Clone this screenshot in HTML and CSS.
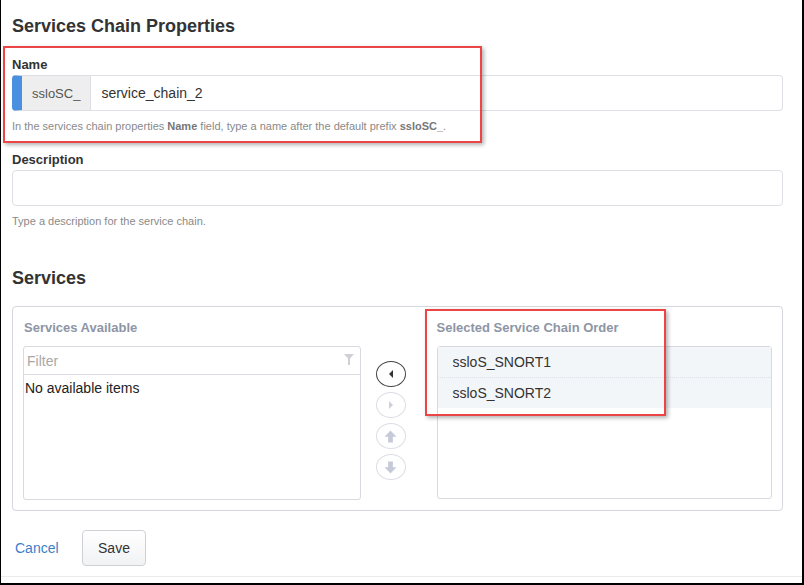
FILE: index.html
```html
<!DOCTYPE html>
<html>
<head>
<meta charset="utf-8">
<link rel="stylesheet" href="styles.css">
</head>
<body>
<div class="frame">
  <div class="page">
    <h1 class="title">Services Chain Properties</h1>

    <div class="field">
      <div class="label label-name">Name</div>
      <div class="input-group">
        <span class="addon">ssloSC_</span>
        <span class="input input-joined">service_chain_2</span>
      </div>
      <p class="help help-name">In the services chain properties <b>Name</b> field, type a name after the default prefix <b>ssloSC_</b>.</p>
    </div>

    <div class="field">
      <div class="label label-desc">Description</div>
      <div class="input input-full"></div>
      <p class="help help-desc">Type a description for the service chain.</p>
    </div>

    <h2 class="section-title">Services</h2>

    <div class="panel">
      <div class="col col-left">
        <div class="col-label">Services Available</div>
        <div class="list list-left">
          <div class="filter">
            <span class="filter-text">Filter</span>
            <svg class="funnel" width="10" height="11" viewBox="0 0 10 11"><polygon points="0,0 10,0 6,4.5 6,11 4,11 4,4.5" fill="#cfd0d4"/></svg>
          </div>
          <div class="empty">No available items</div>
        </div>
      </div>

      <div class="btn-col">
        <div class="circle circle-active">
          <svg width="6" height="8" viewBox="0 0 6 8"><polygon points="5,0 5,8 1,4" fill="#333"/></svg>
        </div>
        <div class="circle">
          <svg width="6" height="8" viewBox="0 0 6 8"><polygon points="1,0 1,8 5,4" fill="#ccd0d9"/></svg>
        </div>
        <div class="circle">
          <svg width="13" height="13" viewBox="0 0 12 12"><polygon points="6,0.5 11.5,6.2 8.2,6.2 8.2,11.5 3.8,11.5 3.8,6.2 0.5,6.2" fill="#c5cad6"/></svg>
        </div>
        <div class="circle">
          <svg width="13" height="13" viewBox="0 0 12 12"><polygon points="6,11.5 11.5,5.8 8.2,5.8 8.2,0.5 3.8,0.5 3.8,5.8 0.5,5.8" fill="#c5cad6"/></svg>
        </div>
      </div>

      <div class="col col-right">
        <div class="col-label">Selected Service Chain Order</div>
        <div class="list list-right">
          <div class="item">ssloS_SNORT1</div>
          <div class="item">ssloS_SNORT2</div>
        </div>
      </div>
    </div>

    <div class="actions">
      <a class="cancel">Cancel</a>
      <button class="save">Save</button>
    </div>
    <div class="bottom-line"></div>
  </div>

  <div class="callout callout-name"></div>
  <div class="callout callout-order"></div>
</div>
</body>
</html>
```

FILE: styles.css
```css
html, body {
  margin: 0;
  padding: 0;
  background: #fff;
}

body {
  font-family: "Liberation Sans", Arial, sans-serif;
  color: #333;
}

.frame {
  position: relative;
  width: 804px;
  height: 585px;
  box-sizing: border-box;
  border-left: 1px solid #000;
  border-right: 2px solid #000;
  border-bottom: 2px solid #000;
  overflow: hidden;
}

.page {
  padding: 15px 19px 0 11px;
}

.title {
  margin: 0 0 20px 0;
  font-size: 18px;
  line-height: 22px;
  font-weight: bold;
  color: #333;
}

.label {
  font-size: 13px;
  line-height: 16px;
  font-weight: bold;
  color: #333;
  margin-bottom: 2px;
}

.label-desc {
  margin-top: 19px;
}

.input-group {
  display: flex;
  height: 36px;
}

.addon {
  display: flex;
  align-items: center;
  box-sizing: border-box;
  height: 36px;
  padding: 0 10px;
  background: #eeeeee;
  border: 1px solid #dddde3;
  border-left: 10px solid #4a8fe0;
  border-radius: 4px 0 0 4px;
  font-size: 13px;
  color: #555;
}

.input {
  box-sizing: border-box;
  height: 36px;
  border: 1px solid #dfdfe6;
  background: #fff;
  font-size: 14px;
  color: #333;
  display: flex;
  align-items: center;
}

.input-joined {
  flex: 1;
  border-left: none;
  border-radius: 0 4px 4px 0;
  padding-left: 10px;
}

.input-full {
  border-radius: 4px;
}

.help {
  margin: 8px 0 0 0;
  font-size: 11px;
  line-height: 14px;
  color: #8a8a8a;
}

.help b {
  color: #777;
}

.section-title {
  margin: 39px 0 17px 0;
  font-size: 18px;
  line-height: 22px;
  font-weight: bold;
  color: #333;
}

.panel {
  display: flex;
  border: 1px solid #d6d6de;
  border-radius: 4px;
  padding: 13px 10px 10px 10px;
}

.col-left {
  width: 338px;
}

.col-right {
  width: 336px;
}

.col-label {
  font-size: 13px;
  line-height: 16px;
  font-weight: bold;
  color: #8e95a5;
  margin-bottom: 10px;
}

.col-left .col-label {
  padding-left: 1px;
}

.list {
  box-sizing: border-box;
  border: 1px solid #d9d9df;
  border-radius: 3px;
  background: #fff;
}

.list-left {
  height: 154px;
}

.list-right {
  height: 153px;
}

.filter {
  display: flex;
  align-items: center;
  justify-content: space-between;
  height: 27px;
  border-bottom: 1px solid #dcdce2;
  padding: 0 6px 0 3px;
}

.filter-text {
  font-size: 14px;
  color: #a8a8a8;
}

.funnel {
  margin-top: -2px;
}

.empty {
  font-size: 14px;
  line-height: 26px;
  padding-left: 1px;
  color: #222;
}

.btn-col {
  display: flex;
  flex-direction: column;
  gap: 5px;
  padding-top: 41px;
  margin-left: 15px;
  margin-right: 31px;
}

.circle {
  box-sizing: border-box;
  width: 30px;
  height: 26px;
  border: 1px solid #dcdee5;
  border-radius: 50%;
  display: flex;
  align-items: center;
  justify-content: center;
}

.circle-active {
  border-color: #444;
}

.item {
  background: #f3f6f9;
  height: 30px;
  line-height: 30px;
  padding-left: 15px;
  font-size: 14px;
  color: #333;
}

.item + .item {
  border-top: 1px dotted #dde0e6;
}

.actions {
  display: flex;
  align-items: center;
  margin-top: 19px;
}

.cancel {
  font-size: 14px;
  color: #3d80c8;
  margin-left: 3px;
  width: 67px;
}

.save {
  box-sizing: border-box;
  width: 64px;
  height: 36px;
  border: 1px solid #cfd0d6;
  border-radius: 4px;
  background: linear-gradient(#ffffff, #f1f2f4);
  font-family: "Liberation Sans", Arial, sans-serif;
  font-size: 14px;
  color: #333;
  padding: 0;
}

.bottom-line {
  margin: 10px -19px 0 -11px;
  border-top: 1px solid #ececef;
}

.callout {
  position: absolute;
  border: 2px solid #ec4545;
  box-shadow: 2px 2px 4px rgba(0, 0, 0, 0.3);
  box-sizing: border-box;
}

.callout-name {
  left: 2px;
  top: 46px;
  width: 479px;
  height: 97px;
}

.callout-order {
  left: 424px;
  top: 309px;
  width: 241px;
  height: 107px;
}
```
